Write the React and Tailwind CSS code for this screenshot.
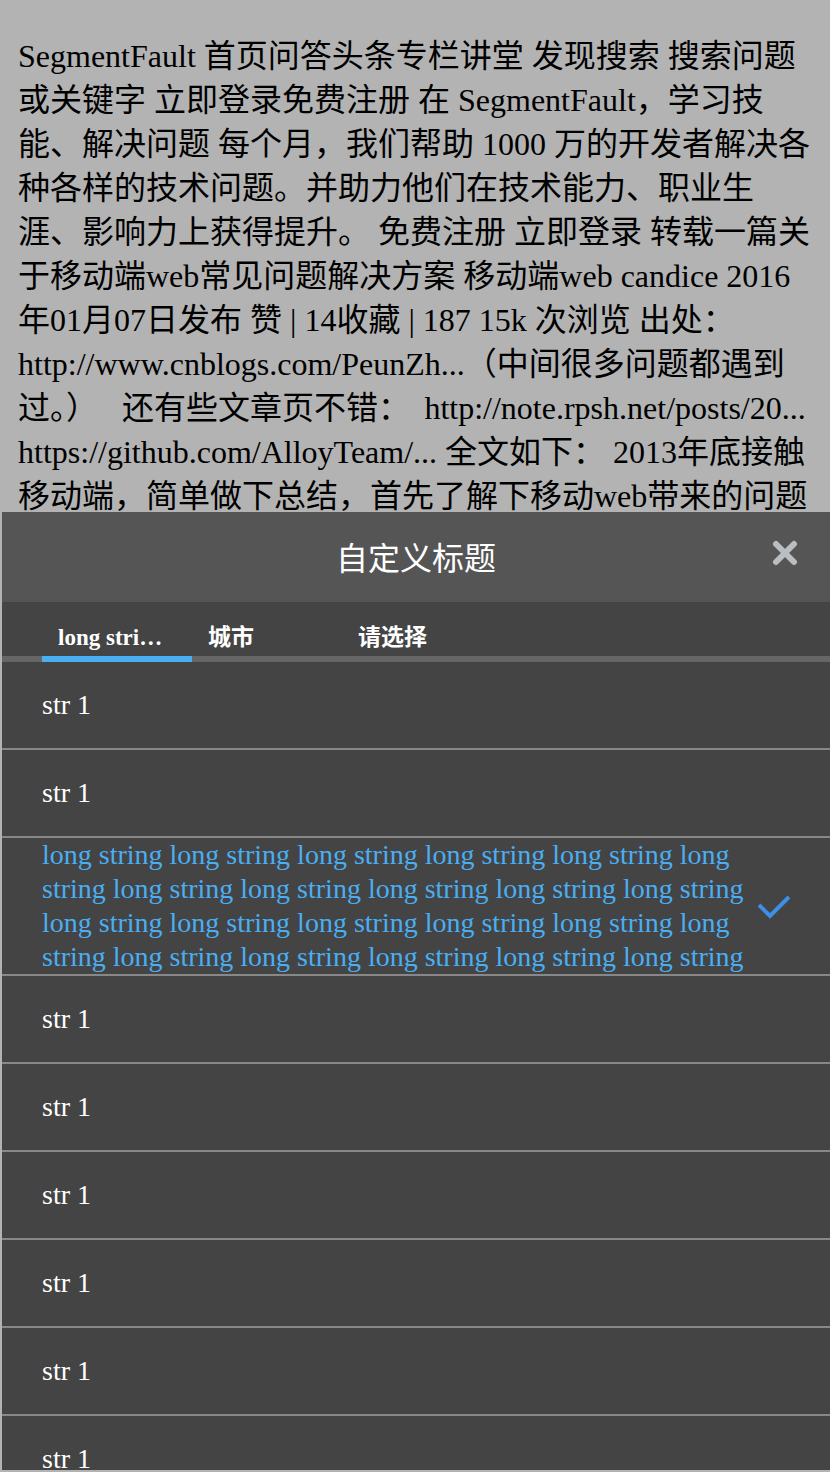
import React from "react";

const serif = { fontFamily: '"Liberation Serif", "Noto Sans CJK SC", serif' };

const body =
  "SegmentFault 首页问答头条专栏讲堂 发现搜索 搜索问题或关键字 立即登录免费注册 在 SegmentFault，学习技能、解决问题 每个月，我们帮助 1000 万的开发者解决各种各样的技术问题。并助力他们在技术能力、职业生涯、影响力上获得提升。 免费注册 立即登录 转载一篇关于移动端web常见问题解决方案 移动端web candice 2016年01月07日发布 赞 | 14收藏 | 187 15k 次浏览 出处：http://www.cnblogs.com/PeunZh...（中间很多问题都遇到过。）\u2002 还有些文章页不错：\u2009 http://note.rpsh.net/posts/20... https://github.com/AlloyTeam/... 全文如下： 2013年底接触移动端，简单做下总结，首先了解下移动web带来的问题 为了页面更好的展示，需要设置合适的视口和字体大小等等。";

const longText = Array(22).fill("long string").join(" ");

function Row({ children, selected }) {
  return (
    <div className="flex min-h-[88px] shrink-0 items-center border-b-2 border-[#888888] px-[40px]">
      <div
        className={
          "flex-1 text-[28px] leading-[34px] " +
          (selected ? "text-[#4aaef2]" : "text-white")
        }
        style={serif}
      >
        {children}
      </div>
      {selected ? (
        <svg width="32" height="26" viewBox="0 0 32 26" className="ml-[8px] shrink-0">
          <polyline
            points="1,12 12,23 31,4"
            fill="none"
            stroke="#3d90e8"
            strokeWidth="4"
          />
        </svg>
      ) : null}
    </div>
  );
}

export default function App() {
  return (
    <div className="relative h-[1472px] w-[830px] overflow-hidden bg-[#b3b3b3]">
      <p
        className="px-[18px] pt-[34px] text-[32px] leading-[44px] text-black"
        style={serif}
      >
        {body}
      </p>

      <div className="absolute left-[2px] right-0 top-[512px] bottom-[2px] flex flex-col overflow-hidden bg-[#444444]">
        <div className="relative flex h-[90px] shrink-0 items-center justify-center bg-[#555555] pb-[2px]">
          <span
            className="text-[32px] leading-[40px] text-white"
            style={{ fontFamily: '"Noto Sans CJK SC", sans-serif' }}
          >
            自定义标题
          </span>
          <svg
            width="26"
            height="26"
            viewBox="0 0 26 26"
            className="absolute right-[32px] top-[28px]"
          >
            <path
              d="M4 4 L22 22 M22 4 L4 22"
              stroke="#babec2"
              strokeWidth="6"
              strokeLinecap="round"
              fill="none"
            />
          </svg>
        </div>

        <div className="shrink-0">
          <div className="flex h-[54px] items-end px-[40px] pb-[6px]">
            {["long stri…", "城市", "请选择"].map((t) => (
              <div
                key={t}
                className="w-[150px] px-[16px] text-[23px] font-bold leading-[24px] text-white"
                style={serif}
              >
                {t}
              </div>
            ))}
          </div>
          <div className="h-[6px] bg-[#666666] px-[40px]">
            <div className="h-[6px] w-[150px] bg-[#4aaef2]" />
          </div>
        </div>

        <div className="flex flex-1 flex-col overflow-hidden">
          <Row>str 1</Row>
          <Row>str 1</Row>
          <Row selected>{longText}</Row>
          <Row>str 1</Row>
          <Row>str 1</Row>
          <Row>str 1</Row>
          <Row>str 1</Row>
          <Row>str 1</Row>
          <Row>str 1</Row>
          <Row>str 1</Row>
        </div>
      </div>
    </div>
  );
}
